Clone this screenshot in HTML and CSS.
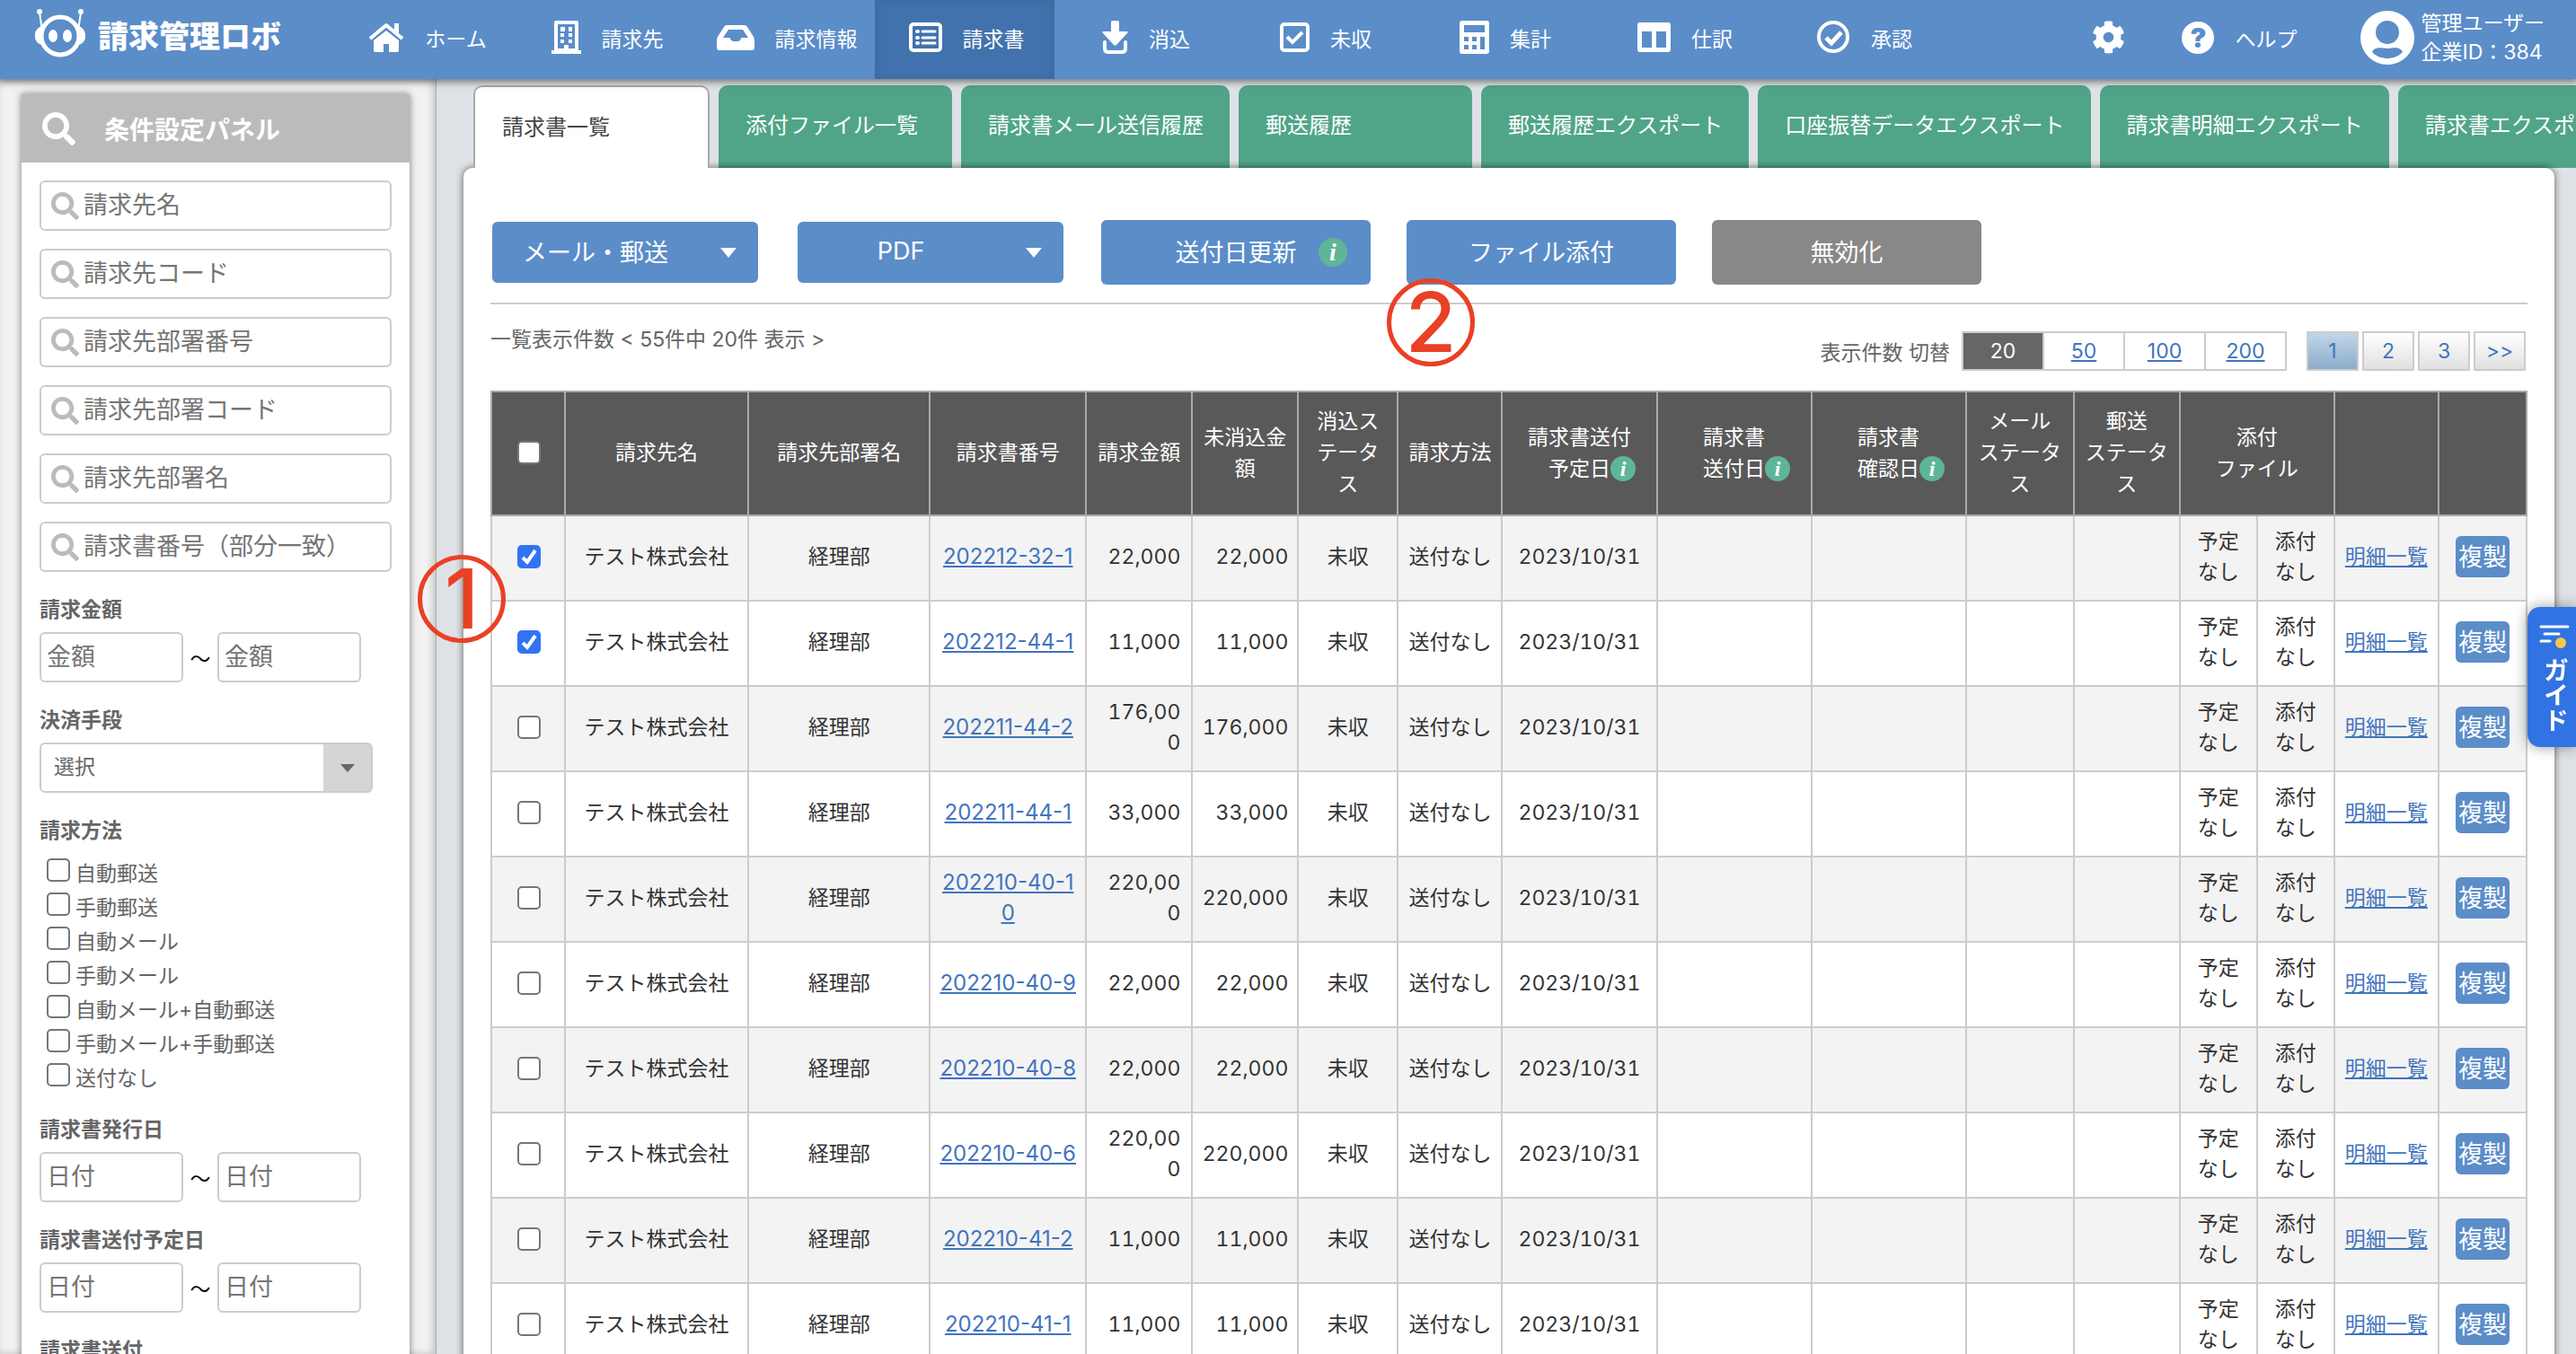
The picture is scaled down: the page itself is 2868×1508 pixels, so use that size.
FILE: index.html
```html
<!DOCTYPE html>
<html lang="ja">
<head>
    <meta charset="UTF-8">
    <meta name="viewport" content="width=device-width, initial-scale=1.0">
    <title>請求書一覧 | 請求管理ロボ</title>
    <link rel="stylesheet" href="styles.css">
</head>
<body>
    <!-- Shared icons -->
    <svg class="sprite" aria-hidden="true">
        <symbol id="search" viewBox="0 0 512 512">
            <path d="M505 442.7L405.3 343c-4.5-4.5-10.6-7-17-7H372c27.6-35.3 44-79.7 44-128C416 93.1 322.9 0 208 0S0 93.1 0 208s93.1 208 208 208c48.3 0 92.7-16.4 128-44v16.3c0 6.4 2.5 12.5 7 17l99.7 99.7c9.4 9.4 24.6 9.4 33.9 0l28.3-28.3c9.4-9.4 9.4-24.6.1-34zM208 336c-70.7 0-128-57.2-128-128 0-70.7 57.2-128 128-128 70.7 0 128 57.2 128 128 0 70.7-57.2 128-128 128z"/>
        </symbol>
    </svg>

    <header class="header">
        <a class="logo" href="#">
            <svg width="56" height="56" viewBox="0 0 56 56">
                <path d="M5 4l3 20M51 4l-3 20" stroke="#fff" stroke-width="2"/>
                <circle cx="5" cy="3" r="3" fill="#fff"/>
                <circle cx="51" cy="3" r="3" fill="#fff"/>
                <path d="M8 19C-3 22-3 38 8 40zM48 19c11 3 11 19 0 21z" fill="#fff"/>
                <circle cx="28" cy="30" r="21" fill="#5b8dc9" stroke="#fff" stroke-width="5"/>
                <ellipse cx="20" cy="30" rx="5" ry="7" fill="#fff"/>
                <ellipse cx="36" cy="30" rx="5" ry="7" fill="#fff"/>
            </svg>
            <span>請求管理ロボ</span>
        </a>

        <nav class="nav">
            <a class="nav-item" href="#">
                <svg width="40" height="34" viewBox="0 0 40 34" fill="#fff">
                    <path d="M29 1h5v12l-5-4z"/>
                    <path d="M2 18L20 3l18 15" fill="none" stroke="#fff" stroke-width="4" stroke-linejoin="round"/>
                    <path d="M6 20L20 9l14 11v11q0 2-2 2h-9V24h-6v9H8q-2 0-2-2z"/>
                </svg>ホーム</a>
            <a class="nav-item" href="#">
                <svg width="33" height="37" viewBox="0 0 33 37" fill="#fff">
                    <path d="M5 2h23v31H5z" fill="none" stroke="#fff" stroke-width="4" stroke-linejoin="round"/>
                    <path d="M0 33h33v4H0zM14 27h5v7h-5z"/>
                    <path d="M10 7h5v5h-5zM19 7h4v5h-4zM10 14h4v4h-4zM19 14h4v4h-4zM10 21h4v4h-4zM19 21h4v4h-4z"/>
                </svg>請求先</a>
            <a class="nav-item" href="#">
                <svg width="42" height="28" viewBox="0 0 42 28">
                    <path fill="#fff" fill-rule="evenodd" d="M11 0h20q2 0 3 2l7 11q1 2 1 4v8q0 3-3 3H3q-3 0-3-3v-8q0-2 1-4L8 2q1-2 3-2zM13 5L7 14h7q1 0 1 1 1 3 3 3h6q2 0 3-3 0-1 1-1h7l-6-9z"/>
                </svg>請求情報</a>
            <a class="nav-item active" href="#">
                <svg width="37" height="33" viewBox="0 0 37 33" fill="none" stroke="#fff">
                    <rect x="2" y="2" width="33" height="29" rx="3" stroke-width="4"/>
                    <path d="M15 10h14M15 17h14M15 23h14" stroke-width="3" stroke-linecap="round"/>
                    <path d="M9 10h1M9 17h1M9 23h1" stroke-width="4" stroke-linecap="round"/>
                </svg>請求書</a>
            <a class="nav-item" href="#">
                <svg width="29" height="37" viewBox="0 0 29 37">
                    <path d="M10 2q0-2 2-2h5q2 0 2 2v10h8q3 0 1 2L16 27q-1 1-3 0L1 14q-2-2 1-2h8z" fill="#fff"/>
                    <path d="M3 24v7q0 4 4 4h15q4 0 4-4v-7" fill="none" stroke="#fff" stroke-width="4" stroke-linecap="round"/>
                </svg>消込</a>
            <a class="nav-item" href="#">
                <svg width="33" height="33" viewBox="0 0 33 33" fill="none" stroke="#fff" stroke-width="4">
                    <rect x="2" y="2" width="29" height="29" rx="3"/>
                    <path d="M8 16l6 6L25 11"/>
                </svg>未収</a>
            <a class="nav-item" href="#">
                <svg width="33" height="37" viewBox="0 0 33 37">
                    <path fill="#fff" fill-rule="evenodd" d="M3 0h27q3 0 3 3v31q0 3-3 3H3q-3 0-3-3V3q0-3 3-3zM5 5v8h23V5zM5 18v5h5v-5zM14 18v5h5v-5zM5 27v5h5v-5zM14 27v5h5v-5zM23 18v14h5V18z"/>
                </svg>集計</a>
            <a class="nav-item" href="#">
                <svg width="37" height="33" viewBox="0 0 37 33">
                    <path fill="#fff" fill-rule="evenodd" d="M3 0h31q3 0 3 3v27q0 3-3 3H3q-3 0-3-3V3q0-3 3-3zM5 10v18h11V10zM21 10v18h11V10z"/>
                </svg>仕訳</a>
            <a class="nav-item" href="#">
                <svg width="37" height="37" viewBox="0 0 37 37" fill="none" stroke="#fff">
                    <circle cx="18" cy="18" r="16" stroke-width="4"/>
                    <path d="M10 19l6 6L27 13" stroke-width="5"/>
                </svg>承認</a>
        </nav>

        <div class="header-right">
            <a class="settings" href="#" aria-label="設定">
                <svg width="37" height="37" viewBox="0 0 512 512" fill="#fff">
                    <path d="M487.4 315.7l-42.6-24.6c4.3-23.2 4.3-47 0-70.2l42.6-24.6c4.9-2.8 7.1-8.6 5.5-14-11.1-35.6-30-67.8-54.7-94.6-3.8-4.1-10-5.1-14.8-2.3L380.8 110c-17.9-15.4-38.5-27.3-60.8-35.1V25.8c0-5.6-3.9-10.5-9.4-11.7-36.7-8.2-74.3-7.8-109.2 0-5.5 1.2-9.4 6.1-9.4 11.7V75c-22.2 7.9-42.8 19.8-60.8 35.1L88.7 85.5c-4.9-2.8-11-1.9-14.8 2.3-24.7 26.7-43.6 58.9-54.7 94.6-1.7 5.4.6 11.2 5.5 14L67.3 221c-4.3 23.2-4.3 47 0 70.2l-42.6 24.6c-4.9 2.8-7.1 8.6-5.5 14 11.1 35.6 30 67.8 54.7 94.6 3.8 4.1 10 5.1 14.8 2.3l42.6-24.6c17.9 15.4 38.5 27.3 60.8 35.1v49.2c0 5.6 3.9 10.5 9.4 11.7 36.7 8.2 74.3 7.8 109.2 0 5.5-1.2 9.4-6.1 9.4-11.7v-49.2c22.2-7.9 42.8-19.8 60.8-35.1l42.6 24.6c4.9 2.8 11 1.9 14.8-2.3 24.7-26.7 43.6-58.9 54.7-94.6 1.5-5.5-.7-11.3-5.6-14.1zM256 336c-44.1 0-80-35.9-80-80s35.9-80 80-80 80 35.9 80 80-35.9 80-80 80z"/>
                </svg>
            </a>
            <a class="help" href="#"><span class="help-mark">?</span>ヘルプ</a>
            <a class="user" href="#">
                <svg width="60" height="60" viewBox="0 0 60 60">
                    <circle cx="30" cy="30" r="30" fill="#fff"/>
                    <circle cx="30" cy="24" r="13" fill="#5b8dc9"/>
                    <path d="M13 46c4-7 10-4 17-4s13-3 17 4c-5 5-11 7-17 7s-12-2-17-7z" fill="#5b8dc9"/>
                </svg>
                <span>管理ユーザー<br>企業ID：384</span>
            </a>
        </div>
    </header>

    <div class="wrapper">
        <!-- Search conditions -->
        <aside class="sidebar">
            <form class="panel">
                <h2 class="panel-title"><svg width="37" height="37"><use href="#search"/></svg>条件設定パネル</h2>
                <div class="panel-body">
                    <div class="search-box"><svg width="31" height="31"><use href="#search"/></svg><input type="text" placeholder="請求先名" aria-label="請求先名"></div>
                    <div class="search-box"><svg width="31" height="31"><use href="#search"/></svg><input type="text" placeholder="請求先コード" aria-label="請求先コード"></div>
                    <div class="search-box"><svg width="31" height="31"><use href="#search"/></svg><input type="text" placeholder="請求先部署番号" aria-label="請求先部署番号"></div>
                    <div class="search-box"><svg width="31" height="31"><use href="#search"/></svg><input type="text" placeholder="請求先部署コード" aria-label="請求先部署コード"></div>
                    <div class="search-box"><svg width="31" height="31"><use href="#search"/></svg><input type="text" placeholder="請求先部署名" aria-label="請求先部署名"></div>
                    <div class="search-box"><svg width="31" height="31"><use href="#search"/></svg><input type="text" placeholder="請求書番号（部分一致）" aria-label="請求書番号（部分一致）"></div>

                    <div class="group">
                        <label class="group-title" for="amount_from">請求金額</label>
                        <div class="range">
                            <input type="text" id="amount_from" placeholder="金額">
                            <span>〜</span>
                            <input type="text" placeholder="金額" aria-label="請求金額 上限">
                        </div>
                    </div>
                    <div class="group">
                        <label class="group-title" for="payment">決済手段</label>
                        <select id="payment">
                            <option>選択</option>
                        </select>
                    </div>
                    <div class="group">
                        <div class="group-title">請求方法</div>
                        <label class="check"><input type="checkbox"><span>自動郵送</span></label>
                        <label class="check"><input type="checkbox"><span>手動郵送</span></label>
                        <label class="check"><input type="checkbox"><span>自動メール</span></label>
                        <label class="check"><input type="checkbox"><span>手動メール</span></label>
                        <label class="check"><input type="checkbox"><span>自動メール+自動郵送</span></label>
                        <label class="check"><input type="checkbox"><span>手動メール+手動郵送</span></label>
                        <label class="check"><input type="checkbox"><span>送付なし</span></label>
                    </div>
                    <div class="group">
                        <label class="group-title" for="issue_from">請求書発行日</label>
                        <div class="range">
                            <input type="text" id="issue_from" placeholder="日付">
                            <span>〜</span>
                            <input type="text" placeholder="日付" aria-label="請求書発行日 終了">
                        </div>
                    </div>
                    <div class="group">
                        <label class="group-title" for="plan_from">請求書送付予定日</label>
                        <div class="range">
                            <input type="text" id="plan_from" placeholder="日付">
                            <span>〜</span>
                            <input type="text" placeholder="日付" aria-label="請求書送付予定日 終了">
                        </div>
                    </div>
                    <div class="group">
                        <div class="group-title">請求書送付</div>
                    </div>
                </div>
            </form>
        </aside>

        <main class="main">
            <nav class="tabs">
                <a class="tab current" href="#">請求書一覧</a>
                <a class="tab" href="#">添付ファイル一覧</a>
                <a class="tab" href="#">請求書メール送信履歴</a>
                <a class="tab" href="#">郵送履歴</a>
                <a class="tab" href="#">郵送履歴エクスポート</a>
                <a class="tab" href="#">口座振替データエクスポート</a>
                <a class="tab" href="#">請求書明細エクスポート</a>
                <a class="tab" href="#">請求書エクスポート</a>
            </nav>

            <section class="content">
                <div class="actions">
                    <button type="button" class="btn btn-menu">メール・郵送</button>
                    <button type="button" class="btn btn-menu">PDF</button>
                    <button type="button" class="btn">送付日更新<span class="info">i</span></button>
                    <button type="button" class="btn">ファイル添付</button>
                    <button type="button" class="btn btn-disabled">無効化</button>
                </div>

                <div class="list-head">
                    <p class="count">一覧表示件数 &lt; 55件中 20件 表示 &gt;</p>
                    <div class="paging">
                        <span class="paging-label">表示件数 切替</span>
                        <div class="sizes">
                            <span class="selected">20</span>
                            <a href="#">50</a>
                            <a href="#">100</a>
                            <a href="#">200</a>
                        </div>
                        <div class="pages">
                            <a class="selected" href="#">1</a>
                            <a href="#">2</a>
                            <a href="#">3</a>
                            <a href="#">&gt;&gt;</a>
                        </div>
                    </div>
                </div>

                <table class="bills">
                    <colgroup>
                        <col class="w82"><col class="w204"><col class="w202"><col class="w174"><col class="w118"><col class="w118">
                        <col class="w111"><col class="w116"><col class="w172"><col class="w172"><col class="w172"><col class="w120">
                        <col class="w118"><col class="w86"><col class="w86"><col class="w116"><col class="w98">
                    </colgroup>
                    <thead>
                        <tr>
                            <th><input type="checkbox" aria-label="すべて選択"></th>
                            <th>請求先名</th>
                            <th>請求先部署名</th>
                            <th>請求書番号</th>
                            <th>請求金額</th>
                            <th>未消込金額</th>
                            <th class="narrow">消込ステータス</th>
                            <th>請求方法</th>
                            <th>請求書送付<br><span class="with-info">予定日<span class="info">i</span></span></th>
                            <th>請求書<br><span class="with-info">送付日<span class="info">i</span></span></th>
                            <th>請求書<br><span class="with-info">確認日<span class="info">i</span></span></th>
                            <th>メール<br>ステータス</th>
                            <th>郵送<br>ステータス</th>
                            <th colspan="2">添付<br>ファイル</th>
                            <th></th>
                            <th></th>
                        </tr>
                    </thead>
                    <tbody>
                        <tr>
                            <td><input type="checkbox" aria-label="選択" checked></td><td>テスト株式会社</td><td>経理部</td><td class="no"><a href="#">202212-32-1</a></td>
                            <td class="amount">22,000</td><td class="rest">22,000</td><td>未収</td><td>送付なし</td><td>2023/10/31</td><td></td><td></td><td></td><td></td>
                            <td>予定<br>なし</td><td>添付<br>なし</td><td><a href="#">明細一覧</a></td><td><button type="button" class="copy">複製</button></td>
                        </tr>
                        <tr>
                            <td><input type="checkbox" aria-label="選択" checked></td><td>テスト株式会社</td><td>経理部</td><td class="no"><a href="#">202212-44-1</a></td>
                            <td class="amount">11,000</td><td class="rest">11,000</td><td>未収</td><td>送付なし</td><td>2023/10/31</td><td></td><td></td><td></td><td></td>
                            <td>予定<br>なし</td><td>添付<br>なし</td><td><a href="#">明細一覧</a></td><td><button type="button" class="copy">複製</button></td>
                        </tr>
                        <tr>
                            <td><input type="checkbox" aria-label="選択"></td><td>テスト株式会社</td><td>経理部</td><td class="no"><a href="#">202211-44-2</a></td>
                            <td class="amount">176,000</td><td class="rest">176,000</td><td>未収</td><td>送付なし</td><td>2023/10/31</td><td></td><td></td><td></td><td></td>
                            <td>予定<br>なし</td><td>添付<br>なし</td><td><a href="#">明細一覧</a></td><td><button type="button" class="copy">複製</button></td>
                        </tr>
                        <tr>
                            <td><input type="checkbox" aria-label="選択"></td><td>テスト株式会社</td><td>経理部</td><td class="no"><a href="#">202211-44-1</a></td>
                            <td class="amount">33,000</td><td class="rest">33,000</td><td>未収</td><td>送付なし</td><td>2023/10/31</td><td></td><td></td><td></td><td></td>
                            <td>予定<br>なし</td><td>添付<br>なし</td><td><a href="#">明細一覧</a></td><td><button type="button" class="copy">複製</button></td>
                        </tr>
                        <tr>
                            <td><input type="checkbox" aria-label="選択"></td><td>テスト株式会社</td><td>経理部</td><td class="no"><a href="#">202210-40-10</a></td>
                            <td class="amount">220,000</td><td class="rest">220,000</td><td>未収</td><td>送付なし</td><td>2023/10/31</td><td></td><td></td><td></td><td></td>
                            <td>予定<br>なし</td><td>添付<br>なし</td><td><a href="#">明細一覧</a></td><td><button type="button" class="copy">複製</button></td>
                        </tr>
                        <tr>
                            <td><input type="checkbox" aria-label="選択"></td><td>テスト株式会社</td><td>経理部</td><td class="no"><a href="#">202210-40-9</a></td>
                            <td class="amount">22,000</td><td class="rest">22,000</td><td>未収</td><td>送付なし</td><td>2023/10/31</td><td></td><td></td><td></td><td></td>
                            <td>予定<br>なし</td><td>添付<br>なし</td><td><a href="#">明細一覧</a></td><td><button type="button" class="copy">複製</button></td>
                        </tr>
                        <tr>
                            <td><input type="checkbox" aria-label="選択"></td><td>テスト株式会社</td><td>経理部</td><td class="no"><a href="#">202210-40-8</a></td>
                            <td class="amount">22,000</td><td class="rest">22,000</td><td>未収</td><td>送付なし</td><td>2023/10/31</td><td></td><td></td><td></td><td></td>
                            <td>予定<br>なし</td><td>添付<br>なし</td><td><a href="#">明細一覧</a></td><td><button type="button" class="copy">複製</button></td>
                        </tr>
                        <tr>
                            <td><input type="checkbox" aria-label="選択"></td><td>テスト株式会社</td><td>経理部</td><td class="no"><a href="#">202210-40-6</a></td>
                            <td class="amount">220,000</td><td class="rest">220,000</td><td>未収</td><td>送付なし</td><td>2023/10/31</td><td></td><td></td><td></td><td></td>
                            <td>予定<br>なし</td><td>添付<br>なし</td><td><a href="#">明細一覧</a></td><td><button type="button" class="copy">複製</button></td>
                        </tr>
                        <tr>
                            <td><input type="checkbox" aria-label="選択"></td><td>テスト株式会社</td><td>経理部</td><td class="no"><a href="#">202210-41-2</a></td>
                            <td class="amount">11,000</td><td class="rest">11,000</td><td>未収</td><td>送付なし</td><td>2023/10/31</td><td></td><td></td><td></td><td></td>
                            <td>予定<br>なし</td><td>添付<br>なし</td><td><a href="#">明細一覧</a></td><td><button type="button" class="copy">複製</button></td>
                        </tr>
                        <tr>
                            <td><input type="checkbox" aria-label="選択"></td><td>テスト株式会社</td><td>経理部</td><td class="no"><a href="#">202210-41-1</a></td>
                            <td class="amount">11,000</td><td class="rest">11,000</td><td>未収</td><td>送付なし</td><td>2023/10/31</td><td></td><td></td><td></td><td></td>
                            <td>予定<br>なし</td><td>添付<br>なし</td><td><a href="#">明細一覧</a></td><td><button type="button" class="copy">複製</button></td>
                        </tr>
                    </tbody>
                </table>
            </section>
        </main>
    </div>

    <!-- Step markers -->
    <div class="step step-1">1</div>
    <div class="step step-2">2</div>

    <button type="button" class="guide">
        <svg width="34" height="30" viewBox="0 0 34 30">
            <path d="M2 4h30M6 12h16M2 20h10" stroke="#fff" stroke-width="3" stroke-linecap="round"/>
            <circle cx="24" cy="22" r="6" fill="#f7c948"/>
        </svg>
        <span>ガイド</span>
    </button>
</body>
</html>
```
FILE: styles.css
```css
* {
    box-sizing: border-box;
}

body {
    margin: 0;
    height: 100vh;
    overflow: hidden;
    display: flex;
    flex-direction: column;
    font-family: Inter, "Noto Sans CJK JP", sans-serif;
    font-size: 23px;
    color: #333;
    background-color: #dee2e6;
}

a {
    color: #4274be;
}

button, input, select {
    font-family: inherit;
}

.sprite {
    display: none;
}

svg {
    flex: none;
}

/* Header */
.header {
    position: relative;
    z-index: 2;
    flex: none;
    display: flex;
    height: 88px;
    background-color: #5b8dc9;
    box-shadow: 0 1px 8px 2px rgba(0, 0, 0, 0.5);
}

.header a {
    color: #fff;
    text-decoration: none;
    white-space: nowrap;
}

.logo {
    display: flex;
    align-items: center;
    gap: 14px;
    width: 374px;
    padding: 0 0 12px 39px;
    font-size: 34px;
    font-weight: 900;
}

.nav {
    display: flex;
}

.nav-item {
    display: flex;
    align-items: center;
    justify-content: center;
    gap: 23px;
    width: 200px;
    padding: 0 0 5px 4px;
}

.nav-item.active {
    background-color: #4272ad;
    box-shadow: inset 0 0 12px rgba(0, 0, 0, 0.1);
}

.header-right {
    display: flex;
    align-items: center;
    margin-left: auto;
    padding: 0 35px 5px 0;
}

.settings {
    display: flex;
    margin-right: 63px;
}

.help {
    display: flex;
    align-items: center;
    gap: 23px;
    margin-right: 71px;
}

.help-mark {
    width: 36px;
    height: 36px;
    border-radius: 50%;
    background-color: #fff;
    color: #5b8dc9;
    font-size: 30px;
    font-weight: 900;
    line-height: 36px;
    text-align: center;
}

.user {
    display: flex;
    align-items: center;
    gap: 7px;
    line-height: 32px;
}

/* Two columns */
.wrapper {
    flex: 1;
    min-height: 0;
    display: flex;
}

/* Sidebar */
.sidebar {
    position: relative;
    z-index: 1;
    flex: none;
    width: 486px;
    padding: 17px 29px 0 24px;
    overflow: hidden;
    background-color: #f2f2f2;
    border-right: 1px solid #aaa;
    box-shadow: inset -3px 0 8px rgba(0, 0, 0, 0.2);
}

.panel {
    background-color: #fff;
    box-shadow: 0 0 8px rgba(0, 0, 0, 0.5);
}

.panel-title {
    display: flex;
    align-items: center;
    gap: 32px;
    height: 76px;
    margin: 0;
    padding: 0 23px;
    background-color: #bbb;
    color: #fff;
    font-size: 28px;
}

.panel-title svg {
    fill: #fff;
}

.panel-body {
    padding: 20px;
}

.search-box {
    display: flex;
    align-items: center;
    gap: 5px;
    height: 56px;
    margin-bottom: 20px;
    padding-left: 11px;
    border: 2px solid #ccc;
    border-radius: 6px;
}

.search-box svg {
    fill: #bbb;
}

.search-box input {
    flex: 1;
    min-width: 0;
    padding: 0 0 2px;
    border: none;
    outline: none;
    font-size: 27px;
}

::placeholder {
    color: #757575;
}

.group {
    margin-top: 25px;
}

.group-title {
    display: block;
    margin-bottom: 8px;
    line-height: 34px;
    font-weight: bold;
    color: #666;
}

.range {
    display: flex;
    align-items: center;
}

.range span {
    width: 38px;
    text-align: center;
    color: #000;
}

.range input {
    width: 160px;
    height: 56px;
    padding: 0 6px 2px;
    border: 2px solid #ccc;
    border-radius: 6px;
    font-size: 27px;
}

.group select {
    appearance: none;
    display: block;
    width: 371px;
    height: 56px;
    padding: 0 14px 2px;
    border: 2px solid #ccc;
    border-radius: 6px;
    color: #666;
    font-size: 23px;
    background:
        url("data:image/svg+xml,%3Csvg xmlns='http://www.w3.org/2000/svg' width='16' height='9'%3E%3Cpath d='M0 0h16L8 9z' fill='%23666'/%3E%3C/svg%3E") right 18px center no-repeat,
        linear-gradient(#d5d5d5, #d5d5d5) right / 53px 100% no-repeat #fff;
}

.check {
    display: flex;
    align-items: flex-end;
    gap: 6px;
    height: 38px;
    padding-left: 8px;
    line-height: 30px;
    color: #666;
}

/* Checkboxes */
input[type="checkbox"] {
    appearance: none;
    display: inline-block;
    flex: none;
    width: 26px;
    height: 26px;
    margin: 0;
    border: 2px solid #767676;
    border-radius: 5px;
    background-color: #fff;
    vertical-align: middle;
}

input[type="checkbox"]:checked {
    border-color: #3273f6;
    background: url("data:image/svg+xml,%3Csvg xmlns='http://www.w3.org/2000/svg' viewBox='0 0 22 22'%3E%3Cpath d='M4 12l5 5 9-13' fill='none' stroke='white' stroke-width='4'/%3E%3C/svg%3E") center no-repeat #3273f6;
}

.check input[type="checkbox"] {
    margin-bottom: 6px;
}

/* Main */
.main {
    flex: 1;
    min-width: 0;
    display: flex;
    flex-direction: column;
    padding: 7px 0 0 30px;
    overflow: hidden;
}

.tabs {
    display: flex;
    gap: 10px;
    padding-left: 11px;
}

.tab {
    flex: none;
    min-width: 260px;
    height: 92px;
    padding: 0 29px 0 30px;
    border-radius: 10px 10px 0 0;
    background-color: #50a588;
    color: #fff;
    font-size: 24px;
    line-height: 90px;
    text-decoration: none;
}

.tab.current {
    position: relative;
    z-index: 1;
    min-width: 263px;
    border: 2px solid #aaa;
    border-bottom: none;
    background-color: #fff;
    color: #444;
}

.content {
    flex: 1;
    margin-right: 24px;
    padding: 58px 30px 0;
    border-radius: 10px 10px 0 0;
    background-color: #fff;
    box-shadow: 0 0 8px rgba(0, 0, 0, 0.6);
    clip-path: inset(-8px -8px 0 -8px);
}

/* Buttons */
.actions {
    display: flex;
    gap: 40px;
    padding-bottom: 20px;
    border-bottom: 2px solid #ccc;
}

.btn {
    position: relative;
    width: 300px;
    height: 72px;
    padding: 0 0 4px;
    border: none;
    border-radius: 6px;
    background-color: #5b8dc9;
    color: #fff;
    font-size: 27px;
    cursor: pointer;
}

.btn-menu {
    width: 296px;
    height: 68px;
    margin: 2px;
    padding-right: 66px;
}

.btn-menu::after {
    content: "";
    position: absolute;
    top: 29px;
    right: 24px;
    border: 9px solid transparent;
    border-top: 11px solid #fff;
    border-bottom: none;
}

.btn-disabled {
    background-color: #888;
}

.info {
    position: absolute;
    width: 28px;
    height: 28px;
    border-radius: 50%;
    background-color: #5fb597;
    color: #fff;
    font: italic bold 24px/28px "Liberation Serif", serif;
    text-align: center;
}

.btn .info {
    top: 20px;
    right: 26px;
    width: 32px;
    height: 32px;
    font-size: 28px;
    line-height: 32px;
}

/* Count and paging */
.list-head {
    display: flex;
    justify-content: space-between;
    align-items: flex-start;
    height: 96px;
    padding-top: 22px;
    color: #666;
}

.count {
    margin: 0;
    line-height: 34px;
}

.paging {
    display: flex;
    align-items: center;
    padding: 8px 2px 0 0;
}

.paging-label {
    margin-right: 13px;
}

.sizes, .pages {
    display: flex;
    line-height: 40px;
    text-align: center;
}

.sizes {
    margin-right: 22px;
    border: 2px solid #ccc;
}

.sizes a {
    width: 90px;
    border-left: 2px solid #ccc;
}

.sizes .selected {
    width: 88px;
    background-color: #666;
    color: #fff;
}

.pages {
    gap: 4px;
}

.pages a {
    width: 58px;
    border: 2px solid #ccc;
    background: linear-gradient(#fff, #e0e0e0);
    text-decoration: none;
}

.pages .selected {
    background: linear-gradient(#c0d6ea, #8caccb);
}

/* Bill list */
.bills {
    width: 100%;
    table-layout: fixed;
    border-collapse: collapse;
    font-variant-numeric: tabular-nums;
    text-align: center;
    word-break: break-all;
}

.bills th {
    height: 138px;
    padding: 0 10px 1px;
    border: 2px solid #aaa;
    background-color: #595959;
    color: #fff;
    font-weight: normal;
    line-height: 35px;
}

.bills .narrow {
    padding: 0 12px 1px;
}

.bills td {
    height: 95px;
    padding: 0 10px 3px;
    border: 2px solid #ccc;
    line-height: 34px;
}

.bills tbody tr:nth-child(odd) {
    background-color: #f3f3f3;
}

.bills tbody tr:nth-child(even) {
    background-color: #fff;
}

.bills input[type="checkbox"] {
    margin: 0 0 4px 2px;
}

.bills .no {
    padding: 0 8px 3px;
    font-size: 24px;
    font-variant-numeric: normal;
}

.bills .amount {
    padding: 0 12px 3px;
    text-align: right;
}

.bills .rest {
    text-align: right;
}

.with-info {
    position: relative;
}

.with-info .info {
    top: 0;
    left: 100%;
}

.copy {
    width: 60px;
    height: 46px;
    padding: 0 0 3px;
    border: none;
    border-radius: 6px;
    background-color: #5b8dc9;
    color: #fff;
    font-size: 27px;
    cursor: pointer;
}

.w82 { width: 82px; }
.w86 { width: 86px; }
.w98 { width: 98px; }
.w111 { width: 111px; }
.w116 { width: 116px; }
.w118 { width: 118px; }
.w120 { width: 120px; }
.w172 { width: 172px; }
.w174 { width: 174px; }
.w202 { width: 202px; }
.w204 { width: 204px; }

/* Step markers laid over the screen */
.step {
    position: absolute;
    z-index: 3;
    width: 98px;
    height: 98px;
    border: 5px solid #ea4025;
    border-radius: 50%;
    color: #ea4025;
    font-size: 92px;
    font-weight: 500;
    line-height: 88px;
    text-align: center;
}

.step-1 {
    top: 618px;
    left: 465px;
}

.step-2 {
    top: 310px;
    left: 1544px;
}

/* Guide tab on the right edge */
.guide {
    position: fixed;
    z-index: 3;
    top: 676px;
    right: 0;
    display: flex;
    flex-direction: column;
    align-items: center;
    gap: 8px;
    width: 54px;
    height: 156px;
    padding: 18px 0 0 6px;
    border: none;
    border-radius: 14px 0 0 14px;
    background-color: #3173e3;
    box-shadow: 0 0 16px rgba(0, 0, 0, 0.4);
    color: #fff;
    font-size: 28px;
    font-weight: 600;
    cursor: pointer;
}

.guide span {
    writing-mode: vertical-rl;
}
```
